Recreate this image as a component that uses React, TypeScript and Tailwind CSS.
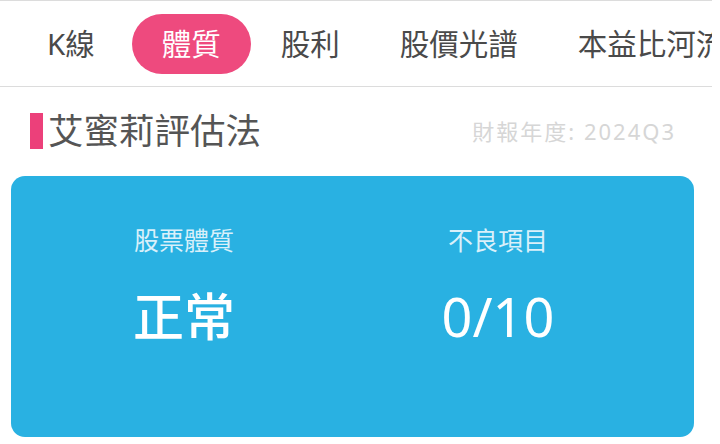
const tabs = ["K線", "體質", "股利", "股價光譜", "本益比河流"]

function TabBar({ active }: { active: string }) {
  return (
    <div className="flex h-[87px] items-center overflow-hidden border-y border-[#dcdcdc] pl-[16px]">
      {tabs.map((t, i) => (
        <div
          key={t}
          className={`shrink-0 whitespace-nowrap text-[29.5px] leading-[60px] ${
            i === 0 ? "pl-[31px] pr-[37px]" : "px-[30px]"
          } ${t === active ? "h-[60px] rounded-full bg-[#ee4a7e] text-white" : "text-[#4a4a4a]"}`}
        >
          {t}
        </div>
      ))}
    </div>
  )
}

function Stat({ label, value, latin = false }: { label: string; value: string; latin?: boolean }) {
  return (
    <div className="flex flex-col items-center">
      <div className="h-[25px] text-[25px] leading-[25px] text-[#d9f0fa]">{label}</div>
      <div
        className={`mt-[38px] h-[50px] leading-[50px] text-white ${
          latin ? "text-[54px]" : "text-[51px] font-medium"
        }`}
      >
        {value}
      </div>
    </div>
  )
}

export default function App() {
  return (
    <div
      className="w-[712px] bg-white"
      style={{ fontFamily: '"Noto Sans", "Noto Sans CJK TC", sans-serif' }}
    >
      <TabBar active="體質" />

      <div className="mt-[26px] flex h-[36px] items-center pl-[30px] pr-[36px]">
        <div className="h-[36px] w-[13px] bg-[#ec407a]" />
        <div className="ml-[5px] text-[35.5px] leading-none text-[#555]">艾蜜莉評估法</div>
        <div className="ml-auto text-[22px] tracking-[2px] text-[#d6d6d6]">財報年度: 2024Q3</div>
      </div>

      <div className="ml-[11px] mt-[27px] grid h-[261px] w-[683px] grid-cols-2 rounded-[14px] bg-[#29b1e2] pl-[16px] pr-[39px] pt-[52px]">
        <Stat label="股票體質" value="正常" />
        <Stat label="不良項目" value="0/10" latin />
      </div>
    </div>
  )
}
